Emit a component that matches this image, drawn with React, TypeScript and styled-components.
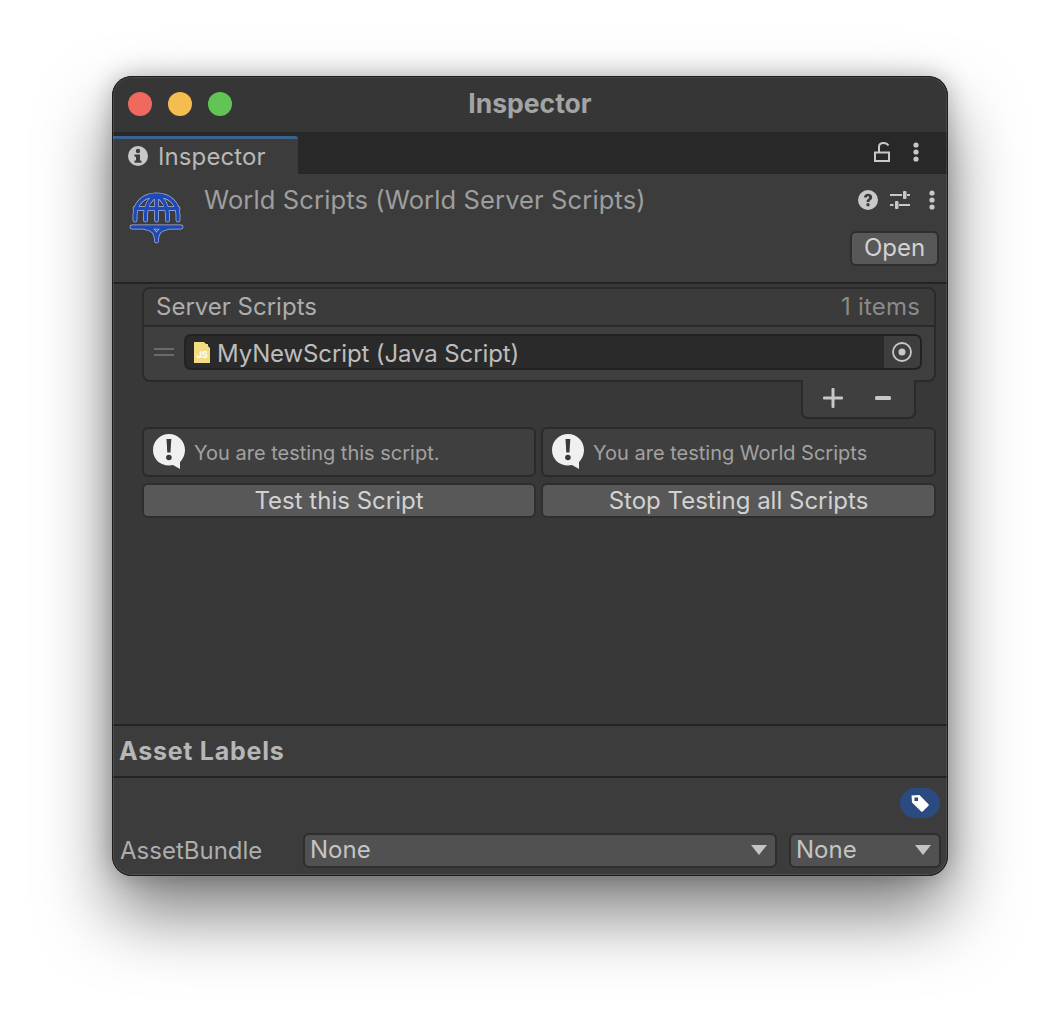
import React from "react";
import styled, { createGlobalStyle, css } from "styled-components";

const GlobalStyle = createGlobalStyle`
  html, body {
    margin: 0;
    padding: 0;
    background: #ffffff;
  }
  body {
    font-family: Inter, "Noto Sans", sans-serif;
    width: 1060px;
    height: 1024px;
    overflow: hidden;
  }
`;

const Page = styled.div`
  padding: 76px 112px 0;
`;

const Window = styled.div`
  position: relative;
  box-sizing: border-box;
  width: 836px;
  height: 800px;
  display: flex;
  flex-direction: column;
  background: #383838;
  border-radius: 20px;
  overflow: hidden;
  box-shadow: 0 38px 70px rgba(0, 0, 0, 0.5), 0 0 24px rgba(0, 0, 0, 0.25);

  /* hairline frame, sits over the panels */
  &::after {
    content: "";
    position: absolute;
    inset: 0;
    border: 1px solid #1c1c1c;
    border-radius: 20px;
    box-shadow: inset 0 0 0 1px rgba(255, 255, 255, 0.1);
    pointer-events: none;
  }
`;

const TitleBar = styled.div`
  position: relative;
  height: 56px;
  flex: none;
  display: flex;
  align-items: center;
  justify-content: center;
  padding-bottom: 2px;
  box-sizing: border-box;
  background: #363636;
`;

const Lights = styled.div`
  position: absolute;
  left: 16px;
  top: 16px;
  display: flex;
  gap: 16px;
`;

const Light = styled.span<{ $color: string }>`
  width: 24px;
  height: 24px;
  border-radius: 50%;
  background: ${(p) => p.$color};
`;

const Title = styled.div`
  font-size: 26.5px;
  font-weight: 700;
  color: #a4a4a4;
`;

const TabStrip = styled.div`
  height: 42px;
  flex: none;
  display: flex;
  justify-content: space-between;
  background: #282828;
`;

const Tab = styled.div`
  box-sizing: border-box;
  width: 186px;
  margin-top: 4px;
  padding: 0 0 1px 16px;
  display: flex;
  align-items: center;
  gap: 10px;
  background: #3c3c3c;
  border-top: 3px solid #3a6190;
  border-top-right-radius: 3px;
  font-size: 24px;
  letter-spacing: 0.1px;
  color: #b8b8b8;
`;

const TabTools = styled.div`
  display: flex;
  align-items: flex-start;
  gap: 23px;
  padding: 10px 29px 0 0;
`;

const Header = styled.div`
  box-sizing: border-box;
  height: 110px;
  flex: none;
  padding: 0 8px 0 16px;
  display: flex;
  background: #3c3c3c;
  border-bottom: 2px solid #232323;
`;

const AssetIcon = styled.div`
  width: 58px;
  margin-right: 18px;
  padding-top: 17px;
  flex: none;
`;

const HeaderName = styled.div`
  flex: 1;
  padding-top: 11px;
  font-size: 25.5px;
  letter-spacing: 0.125px;
  line-height: 30px;
  color: #9e9e9e;
`;

const HeaderSide = styled.div`
  display: flex;
  flex-direction: column;
  align-items: flex-end;
`;

const HeaderTools = styled.div`
  display: flex;
  align-items: center;
  height: 28px;
  margin-top: 12px;
  padding-right: 5px;
`;

const ToolGap = styled.span<{ $size: number }>`
  width: ${(p) => p.$size}px;
`;

const buttonFace = css`
  box-sizing: border-box;
  display: flex;
  align-items: center;
  justify-content: center;
  background: #585858;
  border: 2px solid #2e2e2e;
  border-radius: 6px;
  font-size: 24px;
  color: #d2d2d2;
`;

const OpenButton = styled.div`
  ${buttonFace}
  width: 89px;
  height: 35px;
  margin: 17px 1px 0 0;
  padding-bottom: 2px;
`;

const Content = styled.div`
  flex: 1;
  padding: 3px 12px 0 30px;
`;

const List = styled.div`
  box-sizing: border-box;
  height: 95px;
  border: 2px solid #2a2a2a;
  border-radius: 8px;
  background: #3f3f3f;
`;

const ListHead = styled.div`
  box-sizing: border-box;
  height: 38px;
  padding: 0 14px 2px 12px;
  display: flex;
  align-items: center;
  justify-content: space-between;
  background: #3b3b3b;
  border-bottom: 2px solid #2a2a2a;
  border-radius: 6px 6px 0 0;
  font-size: 24px;
  color: #adadad;
`;

const ItemCount = styled.span`
  letter-spacing: 0.2px;
  color: #8a8a8a;
`;

const ListRow = styled.div`
  padding: 7px 12px 0 10px;
  display: flex;
  align-items: center;
  gap: 10px;
`;

const DragHandle = styled.div`
  width: 20px;
  height: 8px;
  border-top: 2px solid #6a6a6a;
  border-bottom: 2px solid #6a6a6a;
  box-sizing: border-box;
`;

const ObjectField = styled.div`
  box-sizing: border-box;
  flex: 1;
  height: 36px;
  display: flex;
  align-items: center;
  background: #2a2a2a;
  border: 2px solid #222222;
  border-radius: 7px;
  font-size: 24px;
  color: #bdbdbd;
  overflow: hidden;
`;

const FileIcon = styled.div`
  display: flex;
  width: 16px;
  height: 21px;
  margin: 0 7px 0 8px;
  flex: none;
`;

const FieldName = styled.span`
  flex: 1;
  margin-top: 2px;
  letter-spacing: -0.12px;
`;

const Picker = styled.div`
  width: 36px;
  height: 100%;
  display: flex;
  align-items: center;
  justify-content: center;
  background: #3e3e3e;
`;

const ListFooterRow = styled.div`
  display: flex;
  justify-content: flex-end;
  padding-right: 20px;
`;

const ListFooter = styled.div`
  box-sizing: border-box;
  width: 115px;
  height: 39px;
  margin-top: -2px;
  display: flex;
  align-items: center;
  gap: 32px;
  padding: 0 0 2px 20px;
  background: #3f3f3f;
  border: 2px solid #2a2a2a;
  border-top: 0;
  border-radius: 0 0 7px 7px;
  position: relative;
`;

const TwoColumns = styled.div`
  display: grid;
  grid-template-columns: 394px 395px;
  gap: 6px 5px;
`;

const Notice = styled.div`
  box-sizing: border-box;
  height: 50px;
  padding: 0 9px;
  display: flex;
  align-items: center;
  gap: 8px;
  background: #3f3f3f;
  border: 2px solid #2a2a2a;
  border-radius: 6px;
  font-size: 20px;
  color: #a2a2a2;
`;

const NoticeText = styled.span`
  margin-top: 2px;
`;

const ActionButton = styled.div`
  ${buttonFace}
  height: 35px;
`;

const Notices = styled(TwoColumns)`
  margin-top: 8px;
`;

const SectionHead = styled.div`
  box-sizing: border-box;
  height: 54px;
  flex: none;
  padding: 0 0 0 7px;
  display: flex;
  align-items: center;
  background: #3c3c3c;
  border-top: 2px solid #232323;
  border-bottom: 2px solid #232323;
  font-size: 25px;
  font-weight: 700;
  color: #b6b6b6;
  letter-spacing: 0.75px;
`;

const Footer = styled.div`
  box-sizing: border-box;
  height: 98px;
  flex: none;
  display: flex;
  flex-direction: column;
  padding: 10px 7px 0 8px;
  background: #3c3c3c;
`;

const TagPill = styled.div`
  align-self: flex-end;
  width: 40px;
  height: 30px;
  margin-right: 1px;
  display: flex;
  align-items: center;
  justify-content: center;
  background: #2a4a80;
  border-radius: 15px;
`;

const BundleRow = styled.div`
  margin-top: 15px;
  display: flex;
  align-items: center;
`;

const BundleLabel = styled.div`
  width: 183px;
  font-size: 24px;
  color: #adadad;
  flex: none;
`;

const Dropdown = styled.div<{ $width: number }>`
  box-sizing: border-box;
  width: ${(p) => p.$width}px;
  height: 35px;
  margin-right: 12px;
  padding: 0 8px 2px 5px;
  display: flex;
  align-items: center;
  justify-content: space-between;
  background: #515151;
  border: 2px solid #2e2e2e;
  border-radius: 6px;
  font-size: 24px;
  color: #c4c4c4;
  &:last-child {
    margin-right: 0;
  }
`;

const Caret = () => (
  <svg width="16" height="10" viewBox="0 0 16 10">
    <path d="M0 0h16L8 10z" fill="#c4c4c4" />
  </svg>
);

const InfoIcon = () => (
  <svg width="20" height="20" viewBox="0 0 20 20">
    <circle cx="10" cy="10" r="10" fill="#c8c8c8" />
    <circle cx="10" cy="5" r="2.200" fill="#3c3c3c" />
    <path d="M6.500 8.500h5.500v6h1.500v2.300H6.500v-2.300H8v-3.700H6.500z" fill="#3c3c3c" />
  </svg>
);

const LockIcon = () => (
  <svg width="16" height="20" viewBox="0 0 16 20" fill="none" stroke="#c8c8c8" strokeWidth="2">
    <rect x="1" y="10.500" width="14" height="8.500" />
    <path d="M5 10V5C5 2.500 7 1 9.500 1S13.500 2 14.500 3.500" />
  </svg>
);

const MenuDots = () => (
  <svg width="6" height="20" viewBox="0 0 6 20" fill="#c8c8c8">
    <circle cx="3" cy="3" r="2.600" />
    <circle cx="3" cy="10" r="2.600" />
    <circle cx="3" cy="17" r="2.600" />
  </svg>
);

const HelpIcon = () => (
  <svg width="20" height="20" viewBox="0 0 20 20">
    <circle cx="10" cy="10" r="10" fill="#c8c8c8" />
    <path d="M5.900 7.600C6 5.200 7.800 3.800 10.100 3.800c2.400 0 4.100 1.400 4.100 3.500 0 2.900-2.700 2.500-2.700 4.800H8.500c0-3.400 2.600-3.200 2.600-4.700 0-.7-.4-1.100-1-1.100-.7 0-1.100.5-1.200 1.300z" fill="#3c3c3c" />
    <circle cx="10" cy="14.800" r="1.700" fill="#3c3c3c" />
  </svg>
);

const SlidersIcon = () => (
  <svg width="20" height="20" viewBox="0 0 20 20" fill="#c8c8c8">
    <rect x="0" y="4" width="12" height="2" />
    <rect x="17" y="4" width="3" height="2" />
    <rect x="13" y="1" width="3.500" height="8" rx="1" />
    <rect x="0" y="14" width="3.500" height="2" />
    <rect x="9" y="14" width="11" height="2" />
    <rect x="5" y="11" width="3.500" height="8" rx="1" />
  </svg>
);

const globeLines =
  "M7 29V24C7 12 16 4 28.500 4S50 12 50 24V29M7 17.500h43M28.500 4V29M17.500 29V24C17.500 15 22 8 28.500 4c6.500 4 11 11 11 20v5";
const globeStand = "M4 36h49M17 36.500c7 1 11.500 4 11.500 13.500 0-9.500 4.500-12.500 11.500-13.500";

const GlobeIcon = () => (
  <svg width="57" height="54" viewBox="0 0 57 54" fill="none" strokeLinecap="round" strokeLinejoin="round">
    <g stroke="#aab5d2" strokeWidth="4.800">
      <path d={globeLines} />
      <path d={globeStand} />
    </g>
    <g stroke="#1f49b8" strokeWidth="3.400">
      <path d={globeLines} />
      <path d={globeStand} />
    </g>
  </svg>
);

const ScriptFileIcon = () => (
  <svg width="16" height="21" viewBox="0 0 16 21">
    <path d="M0 0h10l2 2h2v2l2 2v15H0z" fill="#f4dc82" />
    <text x="8" y="16" textAnchor="middle" fontSize="9" fontWeight="700" fontFamily="Inter, sans-serif" fill="#ffffff">
      JS
    </text>
  </svg>
);

const TargetIcon = () => (
  <svg width="20" height="20" viewBox="0 0 20 20">
    <circle cx="10" cy="10" r="9" fill="none" stroke="#c8c8c8" strokeWidth="1.800" />
    <circle cx="10" cy="10" r="3.500" fill="#c8c8c8" />
  </svg>
);

const PlusIcon = () => (
  <svg width="20" height="20" viewBox="0 0 20 20" fill="#c8c8c8">
    <rect x="0" y="8.500" width="20" height="3" rx="1" />
    <rect x="8.500" y="0" width="3" height="20" rx="1" />
  </svg>
);

const MinusIcon = () => (
  <svg width="16" height="4" viewBox="0 0 16 4">
    <rect width="16" height="4" rx="1.500" fill="#c8c8c8" />
  </svg>
);

const WarningBubble = () => (
  <svg width="33" height="36" viewBox="0 0 33 36" style={{ flex: "none" }}>
    <path d="M16 0c9 0 16 7 16 16 0 4-1.500 8-4 11l-1 1v7l-7-4c-1.500.3-2.700.5-4 .5C7 31.500 0 25 0 16S7 0 16 0z" fill="#f0f0f0" />
    <path d="M13.500 5h4.800l-.8 13.500h-3.200z" fill="#3a3a3a" />
    <circle cx="15.900" cy="23.500" r="2.800" fill="#3a3a3a" />
  </svg>
);

const TagIcon = () => (
  <svg width="20" height="20" viewBox="0 0 20 20">
    <path d="M1.500 2.500l8-.5 9 9.200c.5.500.5 1 0 1.500l-5.800 5.800c-.5.400-1 .4-1.500 0L2 9.500z" fill="#fff" />
    <rect x="4.500" y="4.500" width="3.500" height="3.500" fill="#2a4a80" />
  </svg>
);

export default function App() {
  return (
    <>
      <GlobalStyle />
      <Page>
        <Window>
          <TitleBar>
            <Lights>
              <Light $color="#ee6a5f" />
              <Light $color="#f5bd4f" />
              <Light $color="#61c454" />
            </Lights>
            <Title>Inspector</Title>
          </TitleBar>
          <TabStrip>
            <Tab>
              <InfoIcon />
              Inspector
            </Tab>
            <TabTools>
              <LockIcon />
              <MenuDots />
            </TabTools>
          </TabStrip>
          <Header>
            <AssetIcon>
              <GlobeIcon />
            </AssetIcon>
            <HeaderName>World Scripts (World Server Scripts)</HeaderName>
            <HeaderSide>
              <HeaderTools>
                <HelpIcon />
                <ToolGap $size={12} />
                <SlidersIcon />
                <ToolGap $size={19} />
                <MenuDots />
              </HeaderTools>
              <OpenButton>Open</OpenButton>
            </HeaderSide>
          </Header>
          <Content>
            <List>
              <ListHead>
                <span>Server Scripts</span>
                <ItemCount>1 items</ItemCount>
              </ListHead>
              <ListRow>
                <DragHandle />
                <ObjectField>
                  <FileIcon>
                    <ScriptFileIcon />
                  </FileIcon>
                  <FieldName>MyNewScript (Java Script)</FieldName>
                  <Picker>
                    <TargetIcon />
                  </Picker>
                </ObjectField>
              </ListRow>
            </List>
            <ListFooterRow>
              <ListFooter>
                <PlusIcon />
                <MinusIcon />
              </ListFooter>
            </ListFooterRow>
            <Notices>
              <Notice>
                <WarningBubble />
                <NoticeText>You are testing this script.</NoticeText>
              </Notice>
              <Notice>
                <WarningBubble />
                <NoticeText>You are testing World Scripts</NoticeText>
              </Notice>
              <ActionButton>Test this Script</ActionButton>
              <ActionButton>Stop Testing all Scripts</ActionButton>
            </Notices>
          </Content>
          <SectionHead>Asset Labels</SectionHead>
          <Footer>
            <TagPill>
              <TagIcon />
            </TagPill>
            <BundleRow>
              <BundleLabel>AssetBundle</BundleLabel>
              <Dropdown $width={474}>
                None
                <Caret />
              </Dropdown>
              <Dropdown $width={152}>
                None
                <Caret />
              </Dropdown>
            </BundleRow>
          </Footer>
        </Window>
      </Page>
    </>
  );
}
